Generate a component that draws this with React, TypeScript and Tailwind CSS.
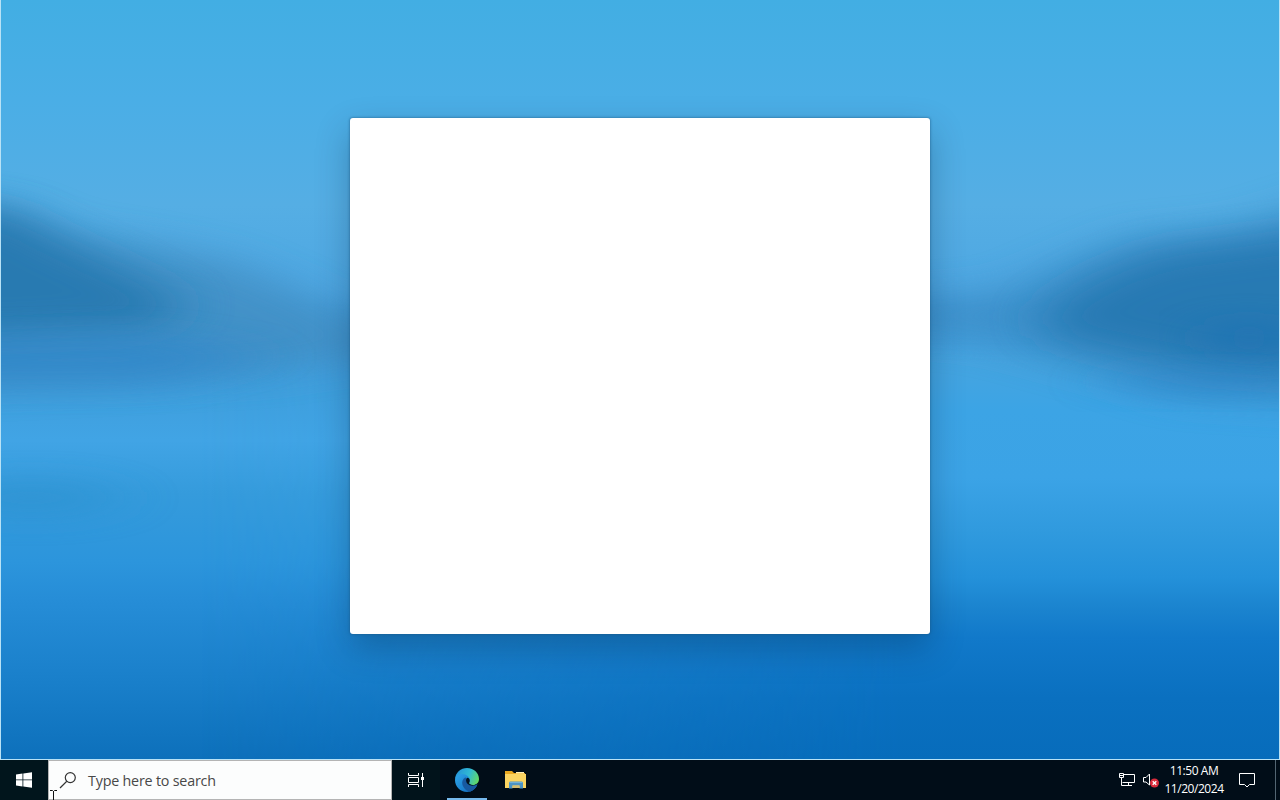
import React from 'react';

const Wallpaper: React.FC = () => (
  <svg className="absolute inset-0 h-full w-full" viewBox="0 0 1280 759" preserveAspectRatio="none">
    <defs>
      <linearGradient id="water" x1="0" y1="0" x2="0" y2="759" gradientUnits="userSpaceOnUse">
        <stop offset="0" stopColor="#42aee3" />
        <stop offset="0.13" stopColor="#4aaee6" />
        <stop offset="0.27" stopColor="#55aee4" />
        <stop offset="0.38" stopColor="#4ea7e2" />
        <stop offset="0.45" stopColor="#3d9ada" />
        <stop offset="0.52" stopColor="#3f9fdd" />
        <stop offset="0.58" stopColor="#41a4e5" />
        <stop offset="0.65" stopColor="#359bdc" />
        <stop offset="0.74" stopColor="#2c95dc" />
        <stop offset="0.79" stopColor="#268dd7" />
        <stop offset="0.9" stopColor="#197fca" />
        <stop offset="1" stopColor="#0d70bb" />
      </linearGradient>
      <linearGradient id="waterRight" x1="0" y1="0" x2="0" y2="759" gradientUnits="userSpaceOnUse">
        <stop offset="0.4" stopColor="#4aa5df" stopOpacity="0" />
        <stop offset="0.48" stopColor="#45a4e0" />
        <stop offset="0.54" stopColor="#3ca4e5" />
        <stop offset="0.63" stopColor="#3ba3e6" />
        <stop offset="0.7" stopColor="#309ade" />
        <stop offset="0.76" stopColor="#2491da" />
        <stop offset="0.8" stopColor="#1b84cf" />
        <stop offset="0.84" stopColor="#1179ca" />
        <stop offset="0.92" stopColor="#0a70c0" />
        <stop offset="1" stopColor="#076cbb" />
      </linearGradient>
      <linearGradient id="fade" x1="200" y1="0" x2="900" y2="0" gradientUnits="userSpaceOnUse">
        <stop offset="0" stopColor="#000" />
        <stop offset="1" stopColor="#fff" />
      </linearGradient>
      <mask id="rightMask" maskUnits="userSpaceOnUse" x="0" y="0" width="1280" height="759">
        <rect width="1280" height="759" fill="url(#fade)" />
      </mask>
      <filter id="blur" x="-50%" y="-50%" width="200%" height="200%">
        <feGaussianBlur stdDeviation="26 17" />
      </filter>
      <filter id="wide" x="-50%" y="-100%" width="200%" height="300%">
        <feGaussianBlur stdDeviation="30 14" />
      </filter>
    </defs>
    <rect width="1280" height="759" fill="url(#water)" />
    <rect y="300" width="1280" height="459" fill="url(#waterRight)" mask="url(#rightMask)" />

    {/* left hills */}
    <path d="M-80 200 L15 210 L70 234 L150 246 L230 262 L300 292 L350 318 L410 330 L410 350 L260 372 L-80 388Z" fill="#438fc4" opacity="0.85" filter="url(#blur)" />
    <path d="M-90 200 L10 212 L60 240 L120 268 L190 305 L150 328 L-90 340Z" fill="#2274ac" opacity="0.8" filter="url(#blur)" />
    <path d="M-80 338 L150 335 L270 355 L160 384 L-80 384Z" fill="#2d86ca" opacity="0.65" filter="url(#wide)" />
    <ellipse cx="30" cy="498" rx="90" ry="18" fill="#2a8fcc" opacity="0.5" filter="url(#wide)" />

    {/* right hills */}
    <path d="M870 302 L1000 292 L1070 262 L1130 238 L1230 230 L1360 190 L1360 405 L1180 395 L1070 362 L980 338 L870 330Z" fill="#3b8bc5" opacity="0.75" filter="url(#blur)" />
    <path d="M1040 312 L1100 275 L1160 252 L1360 226 L1360 378 L1210 370 L1110 350 L1050 336Z" fill="#2474ae" opacity="0.82" filter="url(#blur)" />
    <ellipse cx="1250" cy="338" rx="45" ry="16" fill="#1c70b4" opacity="0.6" filter="url(#wide)" />
    <ellipse cx="1210" cy="382" rx="110" ry="10" fill="#2b84cc" opacity="0.6" filter="url(#wide)" />
  </svg>
);

const WindowsIcon = () => (
  <svg className="h-4 w-4" viewBox="0 0 16 16" fill="#fff">
    <path d="M0 2.4 6.5 1.5V7.5H0ZM7.3 1.4 16 .2V7.5H7.3ZM0 8.3H6.5V14.4L0 13.5ZM7.3 8.3H16V15.8L7.3 14.6Z" />
  </svg>
);

const SearchIcon = () => (
  <svg className="h-[18px] w-[18px]" viewBox="0 0 18 18" fill="none" stroke="#333" strokeWidth="1.2">
    <circle cx="11.3" cy="6.6" r="5" />
    <path d="M7.8 10.3 1 17" />
  </svg>
);

const TaskViewIcon = () => (
  <svg className="h-4 w-[18px]" viewBox="0 0 18 16" fill="none" stroke="#fff">
    <path d="M1.5 1V3.5H11.5V1M1.5 15V12.5H11.5V15M1.5 5.5H11.5V10.5H1.5ZM15.5 1V15" />
    <path d="M14 5H17V8H14Z" fill="#fff" stroke="none" />
  </svg>
);

const EdgeIcon = () => (
  <svg className="h-[26px] w-[26px]" viewBox="0 0 26 26">
    <defs>
      <linearGradient id="edgeTop" x1="2" y1="5" x2="25" y2="15" gradientUnits="userSpaceOnUse">
        <stop offset="0" stopColor="#2594d8" />
        <stop offset="0.5" stopColor="#30b9d4" />
        <stop offset="1" stopColor="#69dd55" />
      </linearGradient>
      <linearGradient id="edgeBody" x1="2" y1="8" x2="17" y2="24" gradientUnits="userSpaceOnUse">
        <stop offset="0" stopColor="#2ca3e8" />
        <stop offset="1" stopColor="#1470c2" />
      </linearGradient>
    </defs>
    <path d="M1 12C1.5 5.5 6.8 1 13 1C20 1 25 6 25 12C25 15.5 22.5 18 19 18C16 18 14.5 16.8 15 15.5C17 10.5 7 5 1 12Z" fill="url(#edgeTop)" />
    <path d="M1 13C1.2 9 4.5 7 8.3 7C12.4 7 16 10 16 13.5C16 14.3 15.6 15 15 15.5C14.5 17 16 18.5 19 18.5C21 18.5 22.5 17.8 23.4 17.3C21.8 22 17.8 25 13 25C6.3 25 1 19.8 1 13Z" fill="url(#edgeBody)" />
    <path d="M11.5 10.2C8.5 12 7.5 15 8.5 18C9.8 21.8 13.5 24.5 16.2 24.5C19.6 23.5 22.2 20.8 23.4 17.3C20 19.5 15.2 19 13.4 16.3C12.2 14.5 12.5 12 11.5 10.2Z" fill="#1759a0" />
    <path d="M13 10.8C11.6 12.2 11.8 15.2 13.4 16.8C15.5 19 20.5 19.4 23.4 17.3C21.5 18.2 18 18.7 15.8 17.2C14.4 16.1 16 15 15.7 12.9C15.4 11.6 14.3 10.7 13 10.8Z" fill="#04121f" />
  </svg>
);

const FolderIcon = () => (
  <svg className="h-5 w-[23px]" viewBox="0 0 23 20">
    <path d="M1 1H8L10 3H21V6H1Z" fill="#e9a820" />
    <path d="M1 4H22V18H1Z" fill="#fbd461" />
    <path d="M12 2H20V3.5H12Z" fill="#fff0b5" />
    <path d="M5 18.5V12.5L6 11.5H18L19 12.5V18.5H15.5V15.5H8.5V18.5Z" fill="#4c93c4" />
    <path d="M5.5 12.5H18.5" stroke="#6fb0da" />
    <path d="M8.5 15.5H15.5V18H8.5Z" fill="#d3bd73" />
  </svg>
);

const NetworkIcon = () => (
  <svg className="h-4 w-[18px]" viewBox="0 0 18 16" fill="none" stroke="#fff">
    <path d="M5 2.5H16.5V10.5H4.5M10.5 11V13.5M7 13.5H14" />
    <path d="M1.5 1.5H5.5V5.5H1.5ZM3.5 6V13.5H7M1.5 3.5H5.5" />
  </svg>
);

const VolumeIcon = () => (
  <svg className="h-[18px] w-[18px]" viewBox="0 0 18 18" fill="none">
    <path d="M1.5 6.5H4L7.5 3V14L4 11H1.5Z" stroke="#fff" />
    <circle cx="12.5" cy="12" r="4.5" fill="#d92b3b" />
    <path d="M10.7 10.2 14.3 13.8M14.3 10.2 10.7 13.8" stroke="#fff" strokeWidth="1.3" />
  </svg>
);

const NotificationIcon = () => (
  <svg className="h-[18px] w-[18px]" viewBox="0 0 18 18" fill="none" stroke="#fff">
    <path d="M1.5 2.5H16.5V13.5H11.5L9 16L6.5 13.5H1.5Z" />
  </svg>
);

const TextCursor = () => (
  <svg className="absolute left-[49px] top-[30px] h-[10px] w-[9px]" viewBox="0 0 9 10" fill="none" stroke="#111">
    <path d="M1 .5H3.5L4.5 1.5L5.5 .5H8M4.5 1V10" />
  </svg>
);

const Taskbar: React.FC = () => (
  <footer className="relative flex h-10 shrink-0 bg-[#010d18] text-white">
    <button className="flex w-12 items-center justify-center bg-[#01151c]">
      <WindowsIcon />
    </button>
    <div className="flex w-[344px] items-center border border-[#b4b4b4] bg-[#fcfdfd] pl-[10px]">
      <SearchIcon />
      <span className="ml-[11px] whitespace-nowrap pt-0.5 text-[14.3px] tracking-[-0.2px] text-[#484848]">Type here to search</span>
    </div>
    <button className="flex w-12 items-center justify-center bg-[#01131b]">
      <TaskViewIcon />
    </button>
    <button className="relative ml-[7px] flex w-10 items-center justify-center">
      <EdgeIcon />
      <span className="absolute inset-x-0 bottom-0 h-0.5 bg-[#76b9ed]" />
    </button>
    <button className="ml-2 flex w-10 items-center justify-center">
      <FolderIcon />
    </button>
    <div className="ml-auto flex items-center">
      <NetworkIcon />
      <div className="ml-1.5">
        <VolumeIcon />
      </div>
      <div className="ml-[3px] flex w-[62px] flex-col items-center whitespace-nowrap text-[12px] leading-[18px] tracking-[-0.45px]">
        <span>11:50 AM</span>
        <span>11/20/2024</span>
      </div>
      <div className="ml-[13px] mr-[19px]">
        <NotificationIcon />
      </div>
      <div className="h-full w-[5px] border-l border-[#536572]" />
    </div>
    <TextCursor />
  </footer>
);

const App: React.FC = () => {
  return (
    <div className="flex h-[800px] w-[1280px] flex-col overflow-hidden font-['Open_Sans','Noto_Sans',sans-serif]">
      <main className="relative flex h-[760px] justify-center overflow-hidden border-x border-b border-[#b8e2f6] pt-[118px]">
        <Wallpaper />
        <section className="relative h-[516px] w-[580px] rounded-[3px] bg-white shadow-[0_0_2px_1px_rgba(30,85,130,0.4),0_14px_34px_rgba(0,35,65,0.3)]" />
      </main>
      <Taskbar />
    </div>
  );
};

export default App;
